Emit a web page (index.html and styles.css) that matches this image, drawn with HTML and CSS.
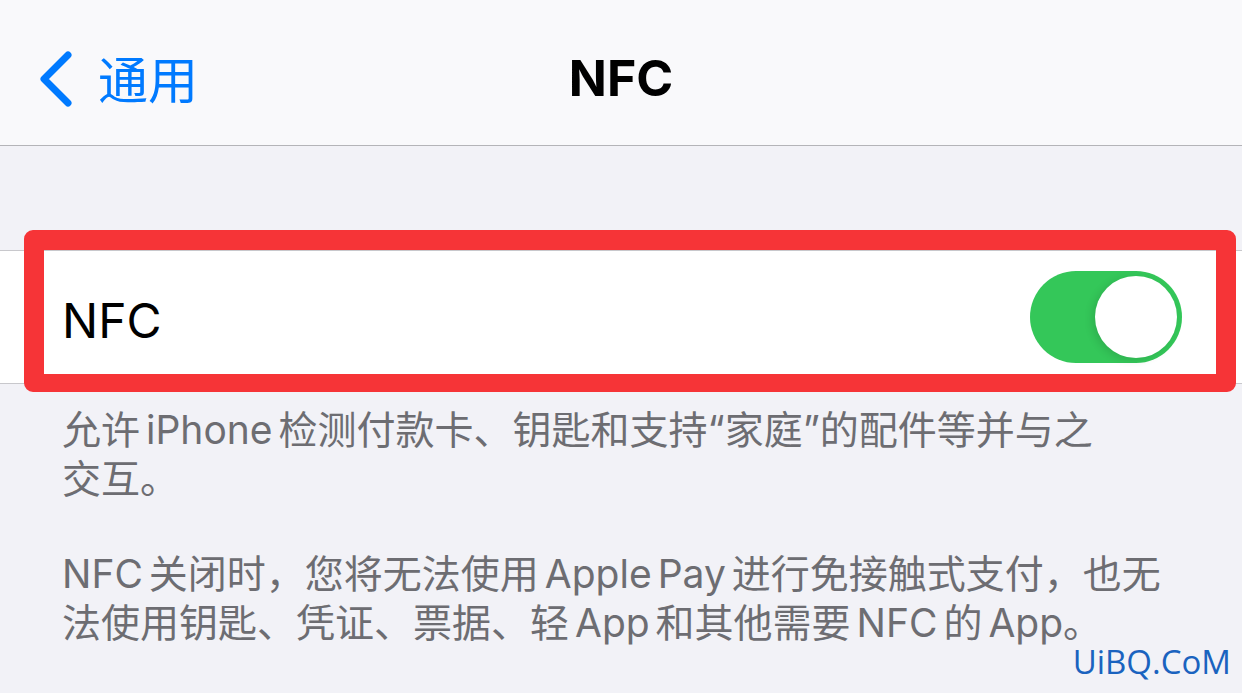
FILE: index.html
```html
<!DOCTYPE html>
<html lang="zh-CN">
<head>
    <meta charset="UTF-8">
    <meta name="viewport" content="width=device-width, initial-scale=1.0">
    <link rel="stylesheet" href="styles.css">
    <title>NFC</title>
</head>
<body>
    <div class="screen">

        <header class="navbar">
            <a class="back" href="#">
                <svg class="chevron" width="40" height="56" viewBox="0 0 40 56">
                    <polyline points="30,4 6,28 30,52" fill="none" stroke="#007aff" stroke-width="7" stroke-linecap="round" stroke-linejoin="round"/>
                </svg>
                <span>通用</span>
            </a>
            <h1 class="title">NFC</h1>
        </header>

        <section class="group">
            <div class="row">
                <span class="label">NFC</span>
                <div class="toggle on">
                    <div class="knob"></div>
                </div>
            </div>
            <div class="mark"></div>
        </section>

        <div class="footer">
            <p>允许 iPhone 检测付款卡、钥匙和支持“家庭”的配件等并与之<br>交互。</p>
            <p>NFC 关闭时，您将无法使用 Apple Pay 进行免接触式支付，也无<br>法使用钥匙、凭证、票据、轻 App 和其他需要 NFC 的 App。</p>
        </div>

        <div class="watermark">UiBQ.CoM</div>
    </div>
</body>
</html>
```

FILE: styles.css
```css
*{
    margin:0;
    padding:0;
    box-sizing:border-box;
    font-family:Inter, "Noto Sans CJK SC", sans-serif;
}
body{
    width:1242px;
    height:693px;
    overflow:hidden;
    background:#f2f2f7;
}
.screen{
    position:relative;
    width:1242px;
    height:693px;
}
.navbar{
    position:relative;
    height:146px;
    background:#f9f9fb;
    border-bottom:1px solid #b4b4b8;

    display:flex;
    align-items:center;
    justify-content:center;
}
.back{
    position:absolute;
    left:38px;
    top:51px;

    display:flex;
    align-items:center;
    gap:20px;

    color:#007aff;
    text-decoration:none;
    font-size:50px;
    line-height:56px;
}
.back span{
    font-family:"Noto Sans CJK SC", sans-serif;
    margin-top:-4px;
}
.title{
    font-size:50px;
    font-weight:700;
    color:#000;
    margin-top:10px;
}
.group{
    position:relative;
    margin-top:104px;
}
.row{
    height:134px;
    background:#fff;
    border-top:1px solid #c8c8cc;
    border-bottom:1px solid #c8c8cc;

    display:flex;
    align-items:center;
    justify-content:space-between;
    padding:0 60px 0 62px;
}
.label{
    font-size:48px;
    color:#000;
    margin-top:6px;
}
.toggle{
    width:152px;
    height:92px;
    border-radius:46px;
    background:#e9e9eb;
    padding:5px;

    display:flex;
}
.toggle.on{
    background:#34c759;
    justify-content:flex-end;
}
.knob{
    width:82px;
    height:82px;
    border-radius:50%;
    background:#fff;
    box-shadow:-3px 2px 8px rgba(0,0,0,0.12);
}
.mark{
    position:absolute;
    left:24px;
    top:-20px;
    width:1212px;
    height:162px;
    border:20px solid #f63437;
    border-bottom-width:18px;
    border-radius:9px;
}
.footer{
    padding:21px 40px 0 62px;
    color:#6d6d72;
    font-size:39px;
    line-height:49px;
    word-spacing:-5px;
}
.footer p{
    margin-bottom:46px;
}
.watermark{
    position:absolute;
    right:11px;
    bottom:9px;
    font-family:"Open Sans", sans-serif;
    font-size:33px;
    color:#1a63bf;
}
```
